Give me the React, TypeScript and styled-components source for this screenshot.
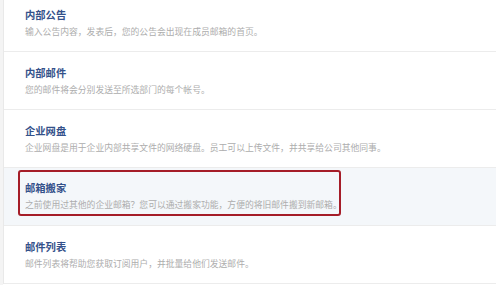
import styled, { createGlobalStyle } from 'styled-components'

const GlobalStyle = createGlobalStyle`
    html, body {
        margin: 0;
        padding: 0;
        background: #ffffff;
        font-family: "Noto Sans CJK SC", "Noto Sans", sans-serif;
    }
`

const Page = styled.div`
    width: 496px;
    height: 285px;
    overflow: hidden;
    border-left: 3px solid #f4f4f4;
    box-sizing: border-box;
`

const List = styled.ul`
    list-style: none;
    margin: -6px 0 0 0;
    padding: 0;
    border-left: 1px solid #e9e9e9;
`

const Row = styled.li<{ $active?: boolean }>`
    box-sizing: border-box;
    height: 58px;
    border-bottom: 1px solid #ececec;
    background: ${p => (p.$active ? '#f4f7fa' : '#ffffff')};
    padding: ${p => (p.$active ? '2px 0 0 14px' : '14px 0 0 21px')};
`

const Highlight = styled.div`
    width: 323px;
    box-sizing: border-box;
    border: 2px solid #a51d28;
    border-radius: 3px;
    padding: 9px 0 3px 5px;
`

const Title = styled.h3`
    margin: 0;
    font-size: 10.3px;
    line-height: 14px;
    font-weight: 700;
    color: #34518a;
`

const Desc = styled.p`
    margin: 4px 0 0 0;
    font-size: 8.8px;
    line-height: 12px;
    color: #adadad;
    white-space: nowrap;
`

interface Item {
    title: string
    desc: string
    active?: boolean
}

const items: Item[] = [
    { title: '内部公告', desc: '输入公告内容，发表后，您的公告会出现在成员邮箱的首页。' },
    { title: '内部邮件', desc: '您的邮件将会分别发送至所选部门的每个帐号。' },
    { title: '企业网盘', desc: '企业网盘是用于企业内部共享文件的网络硬盘。员工可以上传文件，并共享给公司其他同事。' },
    { title: '邮箱搬家', desc: '之前使用过其他的企业邮箱？您可以通过搬家功能，方便的将旧邮件搬到新邮箱。', active: true },
    { title: '邮件列表', desc: '邮件列表将帮助您获取订阅用户，并批量给他们发送邮件。' },
]

export default function App() {
    return (
        <>
            <GlobalStyle />
            <Page>
                <List>
                    {items.map(item => (
                        <Row key={item.title} $active={item.active}>
                            {item.active ? (
                                <Highlight>
                                    <Title>{item.title}</Title>
                                    <Desc>{item.desc}</Desc>
                                </Highlight>
                            ) : (
                                <>
                                    <Title>{item.title}</Title>
                                    <Desc>{item.desc}</Desc>
                                </>
                            )}
                        </Row>
                    ))}
                </List>
            </Page>
        </>
    )
}
